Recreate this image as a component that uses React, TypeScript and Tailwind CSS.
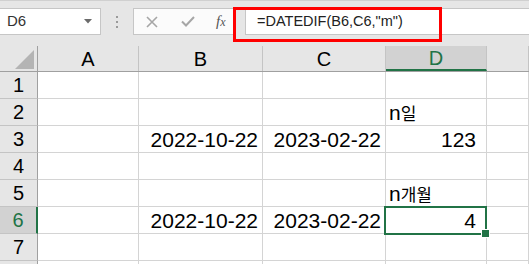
const cols = ['A', 'B', 'C', 'D', '']
const widths = ['w-[101px]', 'w-[124px]', 'w-[123px]', 'w-[101px]', 'flex-1']

type Row = { n: number; label: string; cells: (string | null)[] }

const rows: Row[] = [
  { n: 1, label: '1', cells: [null, null, null, null, null] },
  { n: 2, label: '2', cells: [null, null, null, 'n일', null] },
  { n: 3, label: '3', cells: [null, '2022-10-22', '2023-02-22', '123', null] },
  { n: 4, label: '4', cells: [null, null, null, null, null] },
  { n: 5, label: '5', cells: [null, null, null, 'n개월', null] },
  { n: 6, label: '6', cells: [null, '2022-10-22', '2023-02-22', '4', null] },
  { n: 7, label: '7', cells: [null, null, null, null, null] },
  // row 8 only peeks in at the bottom edge, its number is out of view
  { n: 8, label: '', cells: [null, null, null, null, null] },
]

function CellText({ value, col }: { value: string | null; col: number }) {
  if (!value) return null
  if (value.startsWith('n')) {
    // text label, left aligned
    return (
      <span className="pl-[3px] text-[21px] leading-none">
        n<span className="text-[17px] font-['Noto_Sans_CJK_KR',sans-serif]">{value.slice(1)}</span>
      </span>
    )
  }
  return (
    <span className={`ml-auto text-[21px] leading-none ${col === 3 ? 'pr-[10px]' : 'pr-[4px]'}`}>
      {value}
    </span>
  )
}

export default function App() {
  return (
    <div className="relative w-[529px] h-[264px] overflow-hidden bg-white font-['Liberation_Sans','Noto_Sans_CJK_KR',sans-serif] text-black">
      {/* formula bar area */}
      <div className="h-[46px] bg-[#e6e6e6] border-t border-[#d0d0d0] pt-[7px] flex">
        <div className="w-[101px] h-[27px] bg-white border border-l-0 border-[#c6c6c6] flex items-center pl-[7px] pr-[8px]">
          <span className="text-[15px] text-[#333]">D6</span>
          <svg className="ml-auto" width="8" height="5" viewBox="0 0 8 5">
            <path d="M0 0h8L4 4.5z" fill="#6b6b6b" />
          </svg>
        </div>
        <div className="w-[32px] flex flex-col items-center justify-center gap-[3px] h-[27px]">
          <span className="w-[2px] h-[2px] bg-[#9a9a9a]" />
          <span className="w-[2px] h-[2px] bg-[#9a9a9a]" />
          <span className="w-[2px] h-[2px] bg-[#9a9a9a]" />
        </div>
        <div className="w-[102px] h-[27px] bg-[#fbfbfb] border border-[#c6c6c6] flex items-center">
          <svg className="ml-[12px]" width="12" height="12" viewBox="0 0 12 12">
            <path d="M1 1l10 10M11 1L1 11" stroke="#a6a6a6" strokeWidth="1.6" />
          </svg>
          <svg className="ml-[23px]" width="14" height="11" viewBox="0 0 14 11">
            <path d="M1 5.5l4 4L13 1" stroke="#a6a6a6" strokeWidth="2" fill="none" />
          </svg>
          <span className="ml-[21px] text-[15px] italic text-[#555] font-['Liberation_Serif',serif]">
            f<span className="text-[12px]">x</span>
          </span>
        </div>
        <div className="w-[10px]" />
        <div className="flex-1 h-[27px] bg-white border border-r-0 border-[#c6c6c6] flex items-center pl-[11px]">
          <span className="text-[14.5px] text-[#222]">=DATEDIF(B6,C6,"m")</span>
        </div>
      </div>

      {/* red highlight annotation */}
      <div className="absolute left-[233px] top-[7px] w-[209px] h-[35px] border-[3px] border-[#ff0000]" />

      {/* column headers */}
      <div className="flex h-[26px] bg-[#e6e6e6] border-b border-[#a0a0a0]">
        <div className="relative w-[38px] border-r border-[#a0a0a0]">
          <svg className="absolute left-[15px] top-[4px]" width="19" height="19" viewBox="0 0 19 19">
            <path d="M19 0V19H0z" fill="#b4b4b4" />
          </svg>
        </div>
        {cols.map((c, i) => (
          <div
            key={i}
            className={`${widths[i]} flex items-center justify-center text-[20px] border-r border-[#c4c4c4] ${
              c === 'D' ? 'bg-[#d2d2d2] text-[#217346] border-b-2 border-b-[#217346]' : ''
            }`}
          >
            {c}
          </div>
        ))}
      </div>

      {/* rows */}
      {rows.map((r) => (
        <div key={r.n} className="flex h-[27px]">
          <div
            className={`w-[38px] flex items-center justify-center text-[20px] border-b ${
              r.n === 6
                ? 'bg-[#d2d2d2] text-[#217346] border-r-2 border-r-[#217346] border-b-[#c4c4c4]'
                : 'bg-[#e6e6e6] border-r border-r-[#a0a0a0] border-b-[#c4c4c4]'
            }`}
          >
            {r.label}
          </div>
          {r.cells.map((v, i) => (
            <div
              key={i}
              className={`${widths[i]} relative flex items-center border-r border-b border-[#d4d4d4]`}
            >
              <CellText value={v} col={i} />
              {r.n === 6 && i === 3 && (
                <div className="absolute z-10 -left-[2px] -top-[1px] w-[103px] h-[29px] border-2 border-[#217346]">
                  <div className="absolute -right-[4px] -bottom-[4px] w-[7px] h-[7px] bg-[#217346] outline outline-1 outline-white" />
                </div>
              )}
            </div>
          ))}
        </div>
      ))}
    </div>
  )
}
